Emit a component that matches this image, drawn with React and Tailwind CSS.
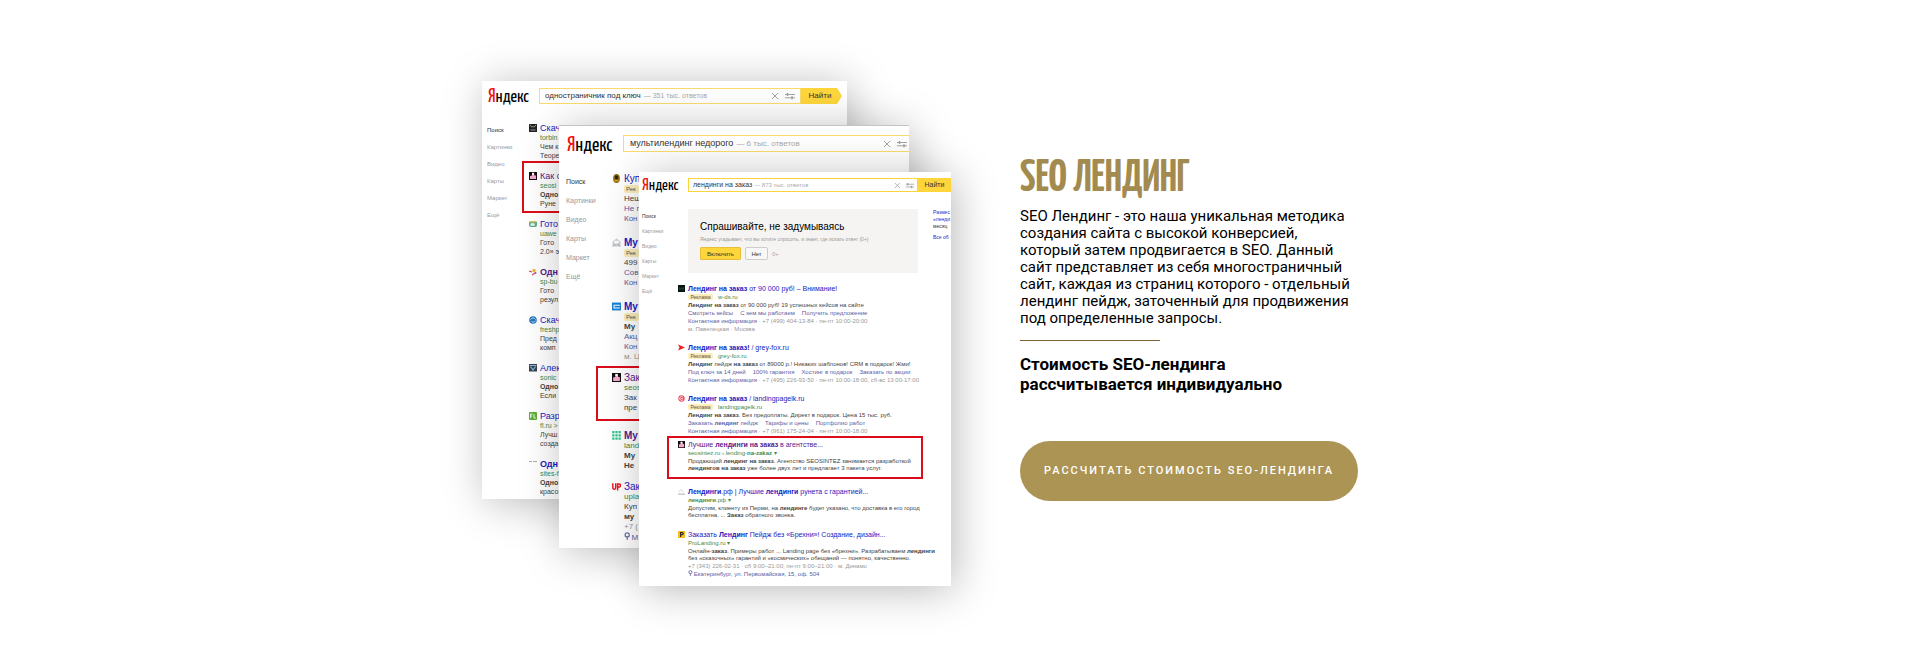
import React from "react";

/* Wraps *starred* fragments of a line in bold */
function Rich({ text }) {
  return text.split("*").map((part, i) => (i % 2 ? <b key={i}>{part}</b> : part));
}

const TONES = {
  url: "text-[#3f8a4a]",
  text: "text-[#444]",
  link: "text-[#6060a4]",
  gray: "text-[#999]",
};

function Pin() {
  return (
    <svg viewBox="0 0 8 10" className="mr-px inline-block h-[1em] w-[0.8em] align-baseline" aria-hidden="true">
      <circle cx="4" cy="3.6" r="2.6" fill="none" stroke="#6c6ca8" strokeWidth="1.5" />
      <path d="M4 6v4" stroke="#6c6ca8" strokeWidth="1.4" />
    </svg>
  );
}

function Favicon({ kind }) {
  const art = {
    tower: (<><rect width="8" height="8" fill="#222" /><path d="M1 .8l1.500 2h3L7 .8M1.500 6h5" stroke="#bbb" fill="none" strokeWidth=".8" /></>),
    seo: (<><rect width="8" height="8" fill="#111" /><path d="M3 1h2l.5 2.500H7V7H1V4l2-.5z" fill="#f4a9cf" /><path d="M3 .8h2v2H3z" fill="#fff" /></>),
    green: (<><rect y="1" width="8" height="6" rx="2" fill="#5cae7c" /><path d="M1 1h6v1.400H1z" fill="#e0c060" /><ellipse cx="3.600" cy="4.600" rx="2.400" ry="1.500" fill="#dff0fa" /></>),
    candy: (<><circle cx="5" cy="2.600" r="1.800" fill="#f4b73e" /><path d="M0 3l3 1M3 7l3-2" stroke="#e0475a" strokeWidth="1.200" /><circle cx="6.500" cy="5" r="1" fill="#8a5ad0" /></>),
    globe: (<><circle cx="4" cy="4" r="3.800" fill="#2878c0" /><path d="M1.500 3.500c1.500-2 4-2 5 0M2.500 5.500c1 1 3 .8 4-.5" stroke="#bfe0f8" fill="none" /></>),
    sonic: (<><rect width="8" height="7.500" fill="#38424c" /><path d="M.5 1.500h7M1.500 2.500L4 6l2.500-3.500" stroke="#8cb8d8" fill="none" strokeWidth="1.200" /></>),
    fl: (<><rect width="8" height="8" rx="1" fill="#5cae36" /><path d="M1.600 6.200V2h1.900M1.600 4h1.600M5 2v4h1.800" stroke="#fff" fill="none" strokeWidth=".9" /></>),
    line: <path d="M0 1.500h3M4 1.500h4" stroke="#999" strokeWidth=".8" />,
    coin: (<><ellipse cx="4" cy="4" rx="3" ry="4" fill="#8a6a10" /><ellipse cx="4" cy="3" rx="1.500" ry="1.600" fill="#2b220c" /><path d="M2 6h4" stroke="#d8ac2c" /></>),
    mail: (<><path d="M.5 3L4 .5 7.500 3v4.500h-7z" fill="#c9cdd2" /><path d="M2 2.500h4v2L4 6 2 4.500z" fill="#fff" /><path d="M.5 7.500L4 5l3.500 2.500" stroke="#9aa3ad" strokeWidth=".5" fill="none" /></>),
    blue: (<><rect y=".5" width="8" height="7" fill="#1681d6" /><path d="M7 2.800H1.800v2.600H7" stroke="#fff" fill="none" strokeWidth=".9" /></>),
    grid: <path d="M1.200 0v8M4 0v8M6.800 0v8" stroke="#2cc48c" strokeWidth="2" strokeDasharray="2 .9" />,
    up: <path d="M.7 1v3.500q0 2 1.300 2t1.300-2V1M5 7.500V1.700h1.200q1.300 0 1.300 1.300T6.200 4.500H5" stroke="#ee1620" strokeWidth="1.300" fill="none" />,
    dark: (<><rect width="8" height="8" fill="#0a1413" /><path d="M1 2.500l1.500 3L4 3l1.500 2.500L7 2.500" stroke="#2d6b62" strokeWidth=".7" fill="none" /></>),
    arrow: <path d="M0 .5L8 4 0 7.500 1.800 4z" fill="#ee1c1c" />,
    swirl: (<><circle cx="4" cy="4" r="3.600" fill="#ee4356" /><path d="M5.800 2.600A2.200 2.200 0 1 0 6 5M3 4h2.400" stroke="#fff" strokeWidth=".9" fill="none" /></>),
    mount: (<><path d="M1 5l2.500-3.500L6 5" stroke="#c8c8dc" fill="none" strokeWidth=".8" /><path d="M0 7h8" stroke="#999" strokeWidth=".9" /></>),
    pro: (<><rect width="8" height="8" fill="#f6bd1c" /><path d="M3 6.800V1.700h1.300q1.500 0 1.500 1.300T4.300 4.300H3" stroke="#222" strokeWidth="1.300" fill="none" /></>),
  };
  return <svg viewBox="0 0 8 8" className="size-full" aria-hidden="true">{art[kind]}</svg>;
}

function Controls({ className }) {
  return (
    <svg viewBox="0 0 24 8" fill="none" stroke="#a3a3a3" className={className} aria-hidden="true">
      <path d="M1 1l6 6M7 1L1 7" />
      <path d="M14 2.500h10M14 5.800h10" />
      <path d="M16.500 1v3M21 4.300v3" strokeWidth="1.600" />
    </svg>
  );
}

function Logo({ className, initial }) {
  return (
    <a href="#yandex" className={"block h-4 shrink-0 whitespace-nowrap font-['Yanone_Kaffeesatz','Roboto_Condensed',Roboto,sans-serif] text-black " + className}>
      <span className={"text-[#f00f0f] " + initial}>Я</span>ндекс
    </a>
  );
}

function Nav({ className }) {
  return (
    <nav className={"flex shrink-0 flex-col text-[#999] " + className}>
      {["Поиск", "Картинки", "Видео", "Карты", "Маркет", "Ещё"].map((t, i) => (
        <a key={t} href={"#nav" + i} className={i ? "" : "text-[#333]"}>{t}</a>
      ))}
    </nav>
  );
}

function Result({ item, icon, gap, title, mark, tag }) {
  return (
    <article className={"relative flex whitespace-nowrap " + gap + " " + (item.space || "")}>
      <div className={"shrink-0 " + icon}><Favicon kind={item.icon} /></div>
      <div>
        <h3 className={title + " " + (item.visited ? "text-[#551a8b]" : "text-[#1a1abf]")}>
          <a href="#result"><Rich text={item.title} /></a>
        </h3>
        {item.lines.map(([tone, text, extra], i) => (
          <p key={i} className={TONES[tone] + " " + (extra || "")}>
            {tone === "url" && item.ad && (
              <span className={"inline-block rounded-xs bg-[#fbeebb] text-[#555] " + tag}>{item.ad}</span>
            )}
            {tone === "gray" && text.startsWith("Контактная") && <span className={TONES.link}>Контактная информация</span>}
            {text.startsWith("@") && <Pin />}
            {text.replace("@", "").replace("Контактная информация", "").split("|").map((s, k) => (
              <span key={k} className={k ? "ml-[7px]" : ""}><Rich text={s} /></span>
            ))}
          </p>
        ))}
      </div>
      {item.marked && <div className={"absolute border-2 border-[#dc0d1a] " + mark} />}
    </article>
  );
}

const FIRST = [
  { icon: "tower", title: "Скач", lines: [["url", "torbin"], ["text", "Чем к"], ["text", "Теоре"]] },
  { icon: "seo", visited: true, marked: true, title: "Как с", lines: [["url", "seosi"], ["text", "*Одно*"], ["text", "Руне"]] },
  { icon: "green", title: "Гото", lines: [["url", "uawe"], ["text", "Гото"], ["text", "2.0» э"]] },
  { icon: "candy", visited: true, title: "*Одн*", lines: [["url", "sp-bu"], ["text", "Гото"], ["text", "резул"]] },
  { icon: "globe", title: "Скач", lines: [["url", "freshp"], ["text", "Пред"], ["text", "комп"]] },
  { icon: "sonic", title: "Алек", lines: [["url", "sonic"], ["text", "*Одно*"], ["text", "Если"]] },
  { icon: "fl", title: "Разр", lines: [["url", "fl.ru > f"], ["text", "Лучш"], ["text", "созда"]] },
  { icon: "line", title: "*Одн*", lines: [["url", "sites-f"], ["text", "*Одно*"], ["text", "красо"]] },
];

const SECOND = [
  { icon: "coin", ad: "Рек", title: "Куп", lines: [["url", ""], ["text", "Нещ"], ["link", "Не п"], ["link", "Кон"]] },
  { icon: "mail", ad: "Рек", space: "mt-[14px]", title: "*Му*", lines: [["url", ""], ["text", "499"], ["link", "Сов"], ["link", "Кон"]] },
  { icon: "blue", ad: "Рек", space: "mt-[14px]", title: "*Му*", lines: [["url", ""], ["text", "*Му*"], ["link", "Акц"], ["link", "Кон"], ["gray", "м. Ц"]] },
  { icon: "seo", visited: true, marked: true, space: "mt-[11px]", title: "Зак", lines: [["url", "seos"], ["text", "Зак"], ["text", "пре"]] },
  { icon: "grid", visited: true, space: "mt-[18px]", title: "*Му*", lines: [["url", "land"], ["text", "*Му*"], ["text", "*Не*"]] },
  { icon: "up", space: "mt-[11px]", title: "Зак", lines: [["url", "upla"], ["text", "Куп"], ["text", "*му*"], ["gray", "+7 ("], ["link", "@М"]] },
];

const THIRD = [
  { icon: "dark", ad: "Реклама", title: "*Лендинг на заказ* от 90 000 руб! – Внимание!", lines: [
    ["url", "w-ds.ru"], ["text", "*Лендинг на заказ* от 90 000 руб! 19 успешных кейсов на сайте"],
    ["link", "Смотреть кейсы|С кем мы работаем|Получить предложение"],
    ["gray", "Контактная информация · +7 (499) 404-13-84 · пн-пт 10:00-20:00"], ["gray", "м. Павелецкая · Москва"]] },
  { icon: "arrow", ad: "Реклама", space: "mt-[11px]", title: "*Лендинг на заказ!* / grey-fox.ru", lines: [
    ["url", "grey-fox.ru"], ["text", "*Лендинг* пейдж *на заказ* от 89000 р.! Никаких шаблонов! CRM в подарок! Жми!"],
    ["link", "Под ключ за 14 дней|100% гарантия|Хостинг в подарок|Заказать по акции"],
    ["gray", "Контактная информация · +7 (495) 226-93-50 · пн-пт 10:00-18:00, сб-вс 13:00-17:00"]] },
  { icon: "swirl", ad: "Реклама", space: "mt-[11px]", title: "*Лендинг на заказ* / landingpagelk.ru", lines: [
    ["url", "landingpagelk.ru"], ["text", "*Лендинг на заказ*. Без предоплаты. Директ в подарок. Цена 15 тыс. руб."],
    ["link", "Заказать *лендинг* пейдж|Тарифы и цены|Портфолио работ"],
    ["gray", "Контактная информация · +7 (961) 175-24-04 · пн-пт 10:00-18:00"]] },
  { icon: "seo", visited: true, marked: true, space: "mt-[6px]", title: "Лучшие *лендинги на заказ* в агентстве...", lines: [
    ["url", "seosintez.ru › lending-*na-zakaz* ▾"],
    ["text", "Продающий *лендинг на заказ*. Агентство SEOSINTEZ занимается разработкой", "mt-px leading-[7px]"],
    ["text", "*лендингов на заказ* уже более двух лет и предлагает 3 пакета услуг.", "leading-[7px]"]] },
  { icon: "mount", space: "mt-[16px]", title: "*Лендинги*.рф | Лучшие *лендинги* рунета с гарантией...", lines: [
    ["url", "*лендинги*.рф ▾"],
    ["text", "Допустим, клиенту из Перми, на *лендинге* будет указано, что доставка в его город", "mt-px leading-[7px]"],
    ["text", "бесплатна. ... *Заказ* обратного звонка.", "leading-[7px]"]] },
  { icon: "pro", space: "mt-[12px]", title: "Заказать *Лендинг* Пейдж без «Брехни»! Создание, дизайн...", lines: [
    ["url", "ProLanding.ru ▾"],
    ["text", "Онлайн-*заказ*. Примеры работ ... Landing page без «брехни». Разрабатываем *лендинги*", "mt-px leading-[7px]"],
    ["text", "без «сказочных» гарантий и «космических» обещаний — понятно, качественно.", "leading-[7px]"],
    ["gray", "+7 (343) 226-02-31 · сб 9:00–21:00; пн-пт 9:00–21:00 · м. Динамо"],
    ["link", "@Екатеринбург, ул. Первомайская, 15, оф. 504"]] },
];

const SHEET = "absolute overflow-hidden bg-white shadow-[4px_4px_40px_rgba(0,0,0,0.27)] ";

function Showcase() {
  return (
    <div className="relative h-[505px] w-[469px] shrink-0 font-['Liberation_Sans',Arial,sans-serif]">
      <div className={SHEET + "left-0 top-0 h-[418px] w-[365px]"}>
        <div className="flex items-center pl-[6px] pr-[5px] pt-[7px]">
          <Logo className="w-[51px] text-[18px] leading-[18px]" initial="text-[20px]" />
          <div className="flex h-4 grow items-center border border-[#fbdc6a] bg-white pl-[5px] pr-[5px] text-[8px] text-[#333]">
            <span>одностраничник под ключ</span>
            <span className="ml-[3px] text-[7px] text-[#aaa]">— 351 тыс. ответов</span>
            <Controls className="ml-auto h-2 w-6" />
          </div>
          <button className="h-4 w-[41px] bg-[#fed63c] pr-[3px] text-[8px] text-[#333] [clip-path:polygon(0_0,88%_0,100%_50%,88%_100%,0_100%)]">Найти</button>
        </div>
        <div className="flex pl-[5px] pt-[18px] text-[7px] leading-[9px]">
          <Nav className="w-[42px] text-[6px] leading-[17px]" />
          <div className="flex flex-col gap-3 pt-[2px]">
            {FIRST.map((item, i) => (
              <Result key={i} item={item} gap="gap-[3px]" icon="size-2" title="text-[9px] leading-[9px]" mark="-left-[7px] -right-[40px] -top-[11px] -bottom-[5px]" />
            ))}
          </div>
        </div>
      </div>

      <div className={SHEET + "left-[77px] top-[44px] h-[423px] w-[350px] border-t border-[#c4c4c4]"}>
        <div className="flex items-center pl-2 pt-[9px]">
          <Logo className="w-[56px] text-[20px] leading-[18px]" initial="text-[22px]" />
          <div className="flex h-[17px] grow items-center border border-r-0 border-[#fbdc6a] bg-white pl-[6px] pr-[2px] text-[9px] text-[#333]">
            <span>мультилендинг недорого</span>
            <span className="ml-[3px] text-[8px] text-[#aaa]">— 6 тыс. ответов</span>
            <Controls className="ml-auto h-2 w-6" />
          </div>
        </div>
        <div className="flex pl-[7px] pt-5 text-[8px] leading-[10px]">
          <Nav className="w-[46px] text-[7px] leading-[19px]" />
          <div className="pt-[2px]">
            {SECOND.map((item, i) => (
              <Result key={i} item={item} gap="gap-[3px]" icon="size-[9px]" title="text-[10px] leading-[10px]" tag="h-2 w-[15px] pl-[2px] align-middle text-[6px] leading-2" mark="-left-4 -right-[60px] -top-[7px] -bottom-[8px]" />
            ))}
          </div>
        </div>
      </div>

      <div className={SHEET + "left-[157px] top-[91px] h-[414px] w-[312px]"}>
        <div className="flex items-center pl-[3px] pt-[5px]">
          <Logo className="w-[46px] text-[16px] leading-[18px]" initial="text-[18px]" />
          <div className="flex h-[14px] grow items-center border border-[#fbd43c] bg-white pl-1 pr-[3px] text-[7px] text-[#333]">
            <span>лендинги на заказ</span>
            <span className="ml-[2px] text-[6px] text-[#aaa]">— 873 тыс. ответов</span>
            <Controls className="ml-auto h-[7px] w-5" />
          </div>
          <button className="h-[14px] w-[33px] bg-[#fed63c] text-[7px] text-[#333]">Найти</button>
        </div>
        <div className="flex pl-[3px] pt-4 text-[6px] leading-2">
          <Nav className="w-[36px] text-[5px] leading-[15px]" />
          <div className="w-[240px] shrink-0">
            <div className="ml-[10px] h-16 w-[230px] bg-[#f5f4f2] pl-3 pt-3">
              <h2 className="text-[10px] leading-3 text-black">Спрашивайте, не задумываясь</h2>
              <p className="text-[5px] leading-3 text-[#999]">Яндекс угадывает, что вы хотите спросить, и знает, где искать ответ (0+)</p>
              <div className="mt-[2px] flex items-center gap-1 text-[6px] text-[#333]">
                <button className="h-[13px] w-[41px] rounded-xs bg-[#fed63c] ring-1 ring-inset ring-[#e8bf38]">Включить</button>
                <button className="h-[13px] w-[23px] rounded-xs border border-[#ccc] bg-[#f8f8f8]">Нет</button>
                <span className="text-[6px] text-[#aaa]">0+</span>
              </div>
            </div>
            <div className="pt-3">
              {THIRD.map((item, i) => (
                <Result key={i} item={item} gap="gap-[3px]" icon="size-[7px]" title="text-[7px] leading-2" tag="mr-[5px] h-[6px] w-[25px] align-middle text-center text-[5px] leading-[6px]" mark="-left-[11px] -right-[5px] -top-[5px] -bottom-[7px]" />
              ))}
            </div>
          </div>
          <aside className="ml-[15px] whitespace-nowrap text-[5px] leading-[7px] text-[#2a2ac4]">
            <p>Размес<br />«ленди</p>
            <p className="text-[#333]">месяц</p>
            <p className="mt-1">Все об</p>
          </aside>
        </div>
      </div>
    </div>
  );
}

export default function App() {
  return (
    <main className="bg-white pb-[75px] pt-[81px]">
      <section className="mx-auto flex max-w-[1200px] items-start gap-[69px] pl-[122px]">
        <Showcase />
        <div className="w-[338px] shrink-0 pt-[71px] font-[Roboto,sans-serif] text-black">
          <h1 className="h-14 whitespace-nowrap font-['Yanone_Kaffeesatz','Roboto_Condensed',Roboto,sans-serif] text-[45px] font-bold leading-[54px] text-[#a38b4f]">SEO ЛЕНДИНГ</h1>
          <p className="whitespace-nowrap text-[15px] leading-[17px]">
            SEO Лендинг - это наша уникальная методика<br />
            создания сайта с высокой конверсией,<br />
            который затем продвигается в SEO. Данный<br />
            сайт представляет из себя многостраничный<br />
            сайт, каждая из страниц которого - отдельный<br />
            лендинг пейдж, заточенный для продвижения<br />
            под определенные запросы.
          </p>
          <hr className="mt-[13px] w-[140px] border-t border-[#7d6233]" />
          <p className="mt-[13px] text-[17px] font-bold leading-5">
            Стоимость SEO-лендинга<br />рассчитывается индивидуально
          </p>
          <button className="mt-[47px] h-[60px] w-full whitespace-nowrap rounded-full bg-[#ac9454] text-[11px] font-medium tracking-[2px] text-white">
            РАССЧИТАТЬ СТОИМОСТЬ SEO-ЛЕНДИНГА
          </button>
        </div>
      </section>
    </main>
  );
}
